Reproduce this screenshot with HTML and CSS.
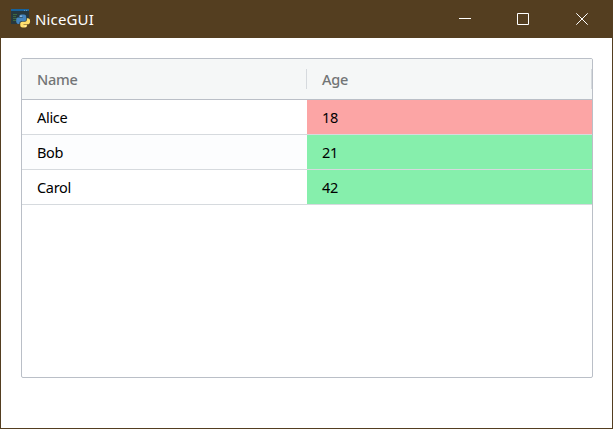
FILE: index.html
```html
<!DOCTYPE html>
<html lang="en">
<head>
<meta charset="utf-8">
<title>NiceGUI</title>
<link rel="stylesheet" href="styles.css">
</head>
<body>
<div class="window">
  <header class="titlebar">
    <svg class="app-icon" width="20" height="20" viewBox="0 0 20 20" aria-hidden="true">
      <path fill="#26383f" d="M0 0h18v15H0z"/>
      <path fill="#17629c" d="M0 0h18v2H0z"/>
      <path fill="#5c94bb" d="M13 1h1v1h-1zM15 1h1v1h-1z"/>
      <path stroke="#3c6940" d="M2 5.500h4M2 7.500h3M2 9.500h4M2 11.500h3"/>
      <g transform="translate(.5 .9) scale(.93)">
        <path fill="#4585be" d="M10.500 5h3q2.300 0 2.300 2.200v3q0 1.900-2 1.900h-3.300q-2 0-2 2v1H7.300Q5 15.100 5 11.500t2.500-3.200h4.700v-.7H8.300v-.7Q8.300 5 10.500 5z"/>
        <path fill="#ffdf6e" d="M16.500 8.900h.9q2.600 0 2.600 3.300t-2.600 3.300h-4.500v.6h3.900v.8q0 2.100-2.200 2.100h-2.800q-2.400 0-2.400-2.200v-2.400q0-1.700 2-1.700h2.900q2.200 0 2.200-2z"/>
        <circle cx="10.200" cy="6.700" r=".7" fill="#e4f1fa"/>
        <circle cx="14.800" cy="17.500" r=".7" fill="#fff9dc"/>
      </g>
    </svg>
    <h1 class="title">NiceGUI</h1>
    <div class="controls">
      <svg class="control" viewBox="0 0 12 12"><path d="M0 5.500h12"/></svg>
      <svg class="control" viewBox="0 0 12 12"><path d="M.5.500h11v11H.5z"/></svg>
      <svg class="control close" viewBox="0 0 12 12"><path d="M.3.300l11.400 11.400M11.700.300L.3 11.700"/></svg>
    </div>
  </header>
  <main class="content">
    <div class="grid">
      <div class="row head"><div class="cell">Name</div><div class="cell">Age</div></div>
      <div class="row"><div class="cell">Alice</div><div class="cell red">18</div></div>
      <div class="row odd"><div class="cell">Bob</div><div class="cell green">21</div></div>
      <div class="row"><div class="cell">Carol</div><div class="cell green">42</div></div>
    </div>
  </main>
</div>
</body>
</html>
```
FILE: styles.css
```css
* { box-sizing: border-box; }
body {
  margin: 0;
  font-family: "Noto Sans", "Open Sans", sans-serif;
}
.window {
  height: 429px;
  border: 1px solid #543e20;
  border-top: 0;
  background: #fff;
}
.titlebar {
  display: flex;
  align-items: center;
  height: 38px;
  padding-left: 10px;
  background: #543e20;
  color: #fff;
}
.app-icon { margin-right: 4px; }
.title {
  margin: 0;
  font-size: 15px;
  font-weight: 400;
  line-height: 20px;
  letter-spacing: 0.15px;
}
.controls {
  display: flex;
  gap: 46px;
  margin-left: auto;
  padding-right: 24px;
}
.control {
  width: 12px;
  height: 12px;
  fill: none;
  stroke: #fff;
}
.close { margin-left: 1px; }
.content { padding: 20px; }
.grid {
  width: 572px;
  height: 320px;
  overflow: hidden;
  border: 1px solid #babfc7;
  border-radius: 2px;
}
.row {
  display: grid;
  grid-template-columns: 285px 285px;
  height: 35px;
  border-bottom: 1px solid #d6dade;
  font-size: 14.5px;
  letter-spacing: -0.3px;
  line-height: 35px;
  color: #000;
}
.cell {
  height: 34px;
  padding-left: 15px;
}
.odd { background: #fcfdfe; }
.red { background: #fca5a5; }
.green { background: #86efac; }
.head {
  align-items: center;
  height: 41px;
  border-color: #babfc7;
  background: #f5f7f7;
  color: #727576;
  font-weight: 500;
}
.head .cell {
  height: 20px;
  line-height: 20px;
  border-right: 1px solid #d6dade;
}
```
